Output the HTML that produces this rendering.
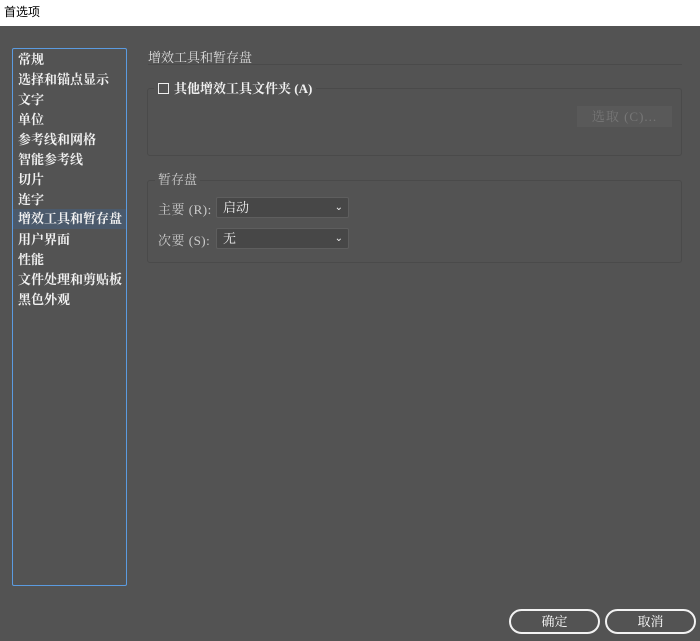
<!DOCTYPE html>
<html><head><meta charset="utf-8"><style>
*{margin:0;padding:0;box-sizing:border-box}
body{width:700px;height:641px;background:#535353;position:relative;overflow:hidden;font-family:"Liberation Serif","Noto Serif CJK SC",serif;font-size:13px;color:#eee}
.title{position:absolute;left:0;top:0;width:700px;height:26px;background:#fff;color:#000;font-family:"Liberation Sans","Noto Sans CJK SC",sans-serif;font-size:12px;padding:3px 0 0 4px}
.side{position:absolute;left:12px;top:48px;width:115px;height:538px;border:1px solid #5b9be0;border-radius:2px}
.side div{position:absolute;left:0;width:113px;height:20px;line-height:20px;padding-left:5px;font-weight:bold;color:#f0f0f0}
.side .sel{background:#4b5a6c}
.abs{position:absolute}
.grp{position:absolute;border:1px solid #4a4a4a;border-radius:3px}
.sel2{position:absolute;left:216px;width:133px;height:21px;background:#474747;border:1px solid #5e5e5e;border-radius:2px;padding-left:6px;line-height:19px;color:#f0f0f0}
.sel2 span{position:absolute;right:5px;top:0;font-size:10px}
.btn{position:absolute;top:609px;width:91px;height:25px;border:2px solid #f2f2f2;border-radius:13px;text-align:center;line-height:21px;color:#fff}
</style></head><body>
<div class="title">首选项</div>
<div class="side">
<div style="top:1px">常规</div>
<div style="top:21px">选择和锚点显示</div>
<div style="top:41px">文字</div>
<div style="top:61px">单位</div>
<div style="top:81px">参考线和网格</div>
<div style="top:101px">智能参考线</div>
<div style="top:121px">切片</div>
<div style="top:141px">连字</div>
<div class="sel" style="top:160px">增效工具和暂存盘</div>
<div style="top:181px">用户界面</div>
<div style="top:201px">性能</div>
<div style="top:221px">文件处理和剪贴板</div>
<div style="top:241px">黑色外观</div>
</div>
<div class="abs" style="left:148px;top:47px;color:#ddd">增效工具和暂存盘</div>
<div class="abs" style="left:148px;top:64px;width:534px;height:1px;background:#4a4a4a"></div>
<div class="grp" style="left:147px;top:88px;width:535px;height:68px"></div>
<div class="abs" style="left:154px;top:80px;background:#535353;padding:0 4px;font-weight:bold;color:#f0f0f0;height:18px;line-height:18px"><span style="display:inline-block;width:11px;height:11px;border:1px solid #eee;vertical-align:-1px;margin-right:5px"></span>其他增效工具文件夹 (A)</div>
<div class="abs" style="left:577px;top:106px;width:95px;height:21px;background:#595959;color:#777;text-align:center;line-height:21px;letter-spacing:1px">选取 (C)...</div>
<div class="grp" style="left:147px;top:180px;width:535px;height:83px"></div>
<div class="abs" style="left:155px;top:171px;background:#535353;padding:0 3px;color:#ccc;height:18px;line-height:18px">暂存盘</div>
<div class="abs" style="left:158px;top:199px;color:#ccc;letter-spacing:0.5px">主要 (R):</div>
<div class="sel2" style="top:197px">启动<span>⌄</span></div>
<div class="abs" style="left:158px;top:230px;color:#ccc;letter-spacing:0.5px">次要 (S):</div>
<div class="sel2" style="top:228px">无<span>⌄</span></div>
<div class="btn" style="left:509px">确定</div>
<div class="btn" style="left:605px">取消</div>
</body></html>
